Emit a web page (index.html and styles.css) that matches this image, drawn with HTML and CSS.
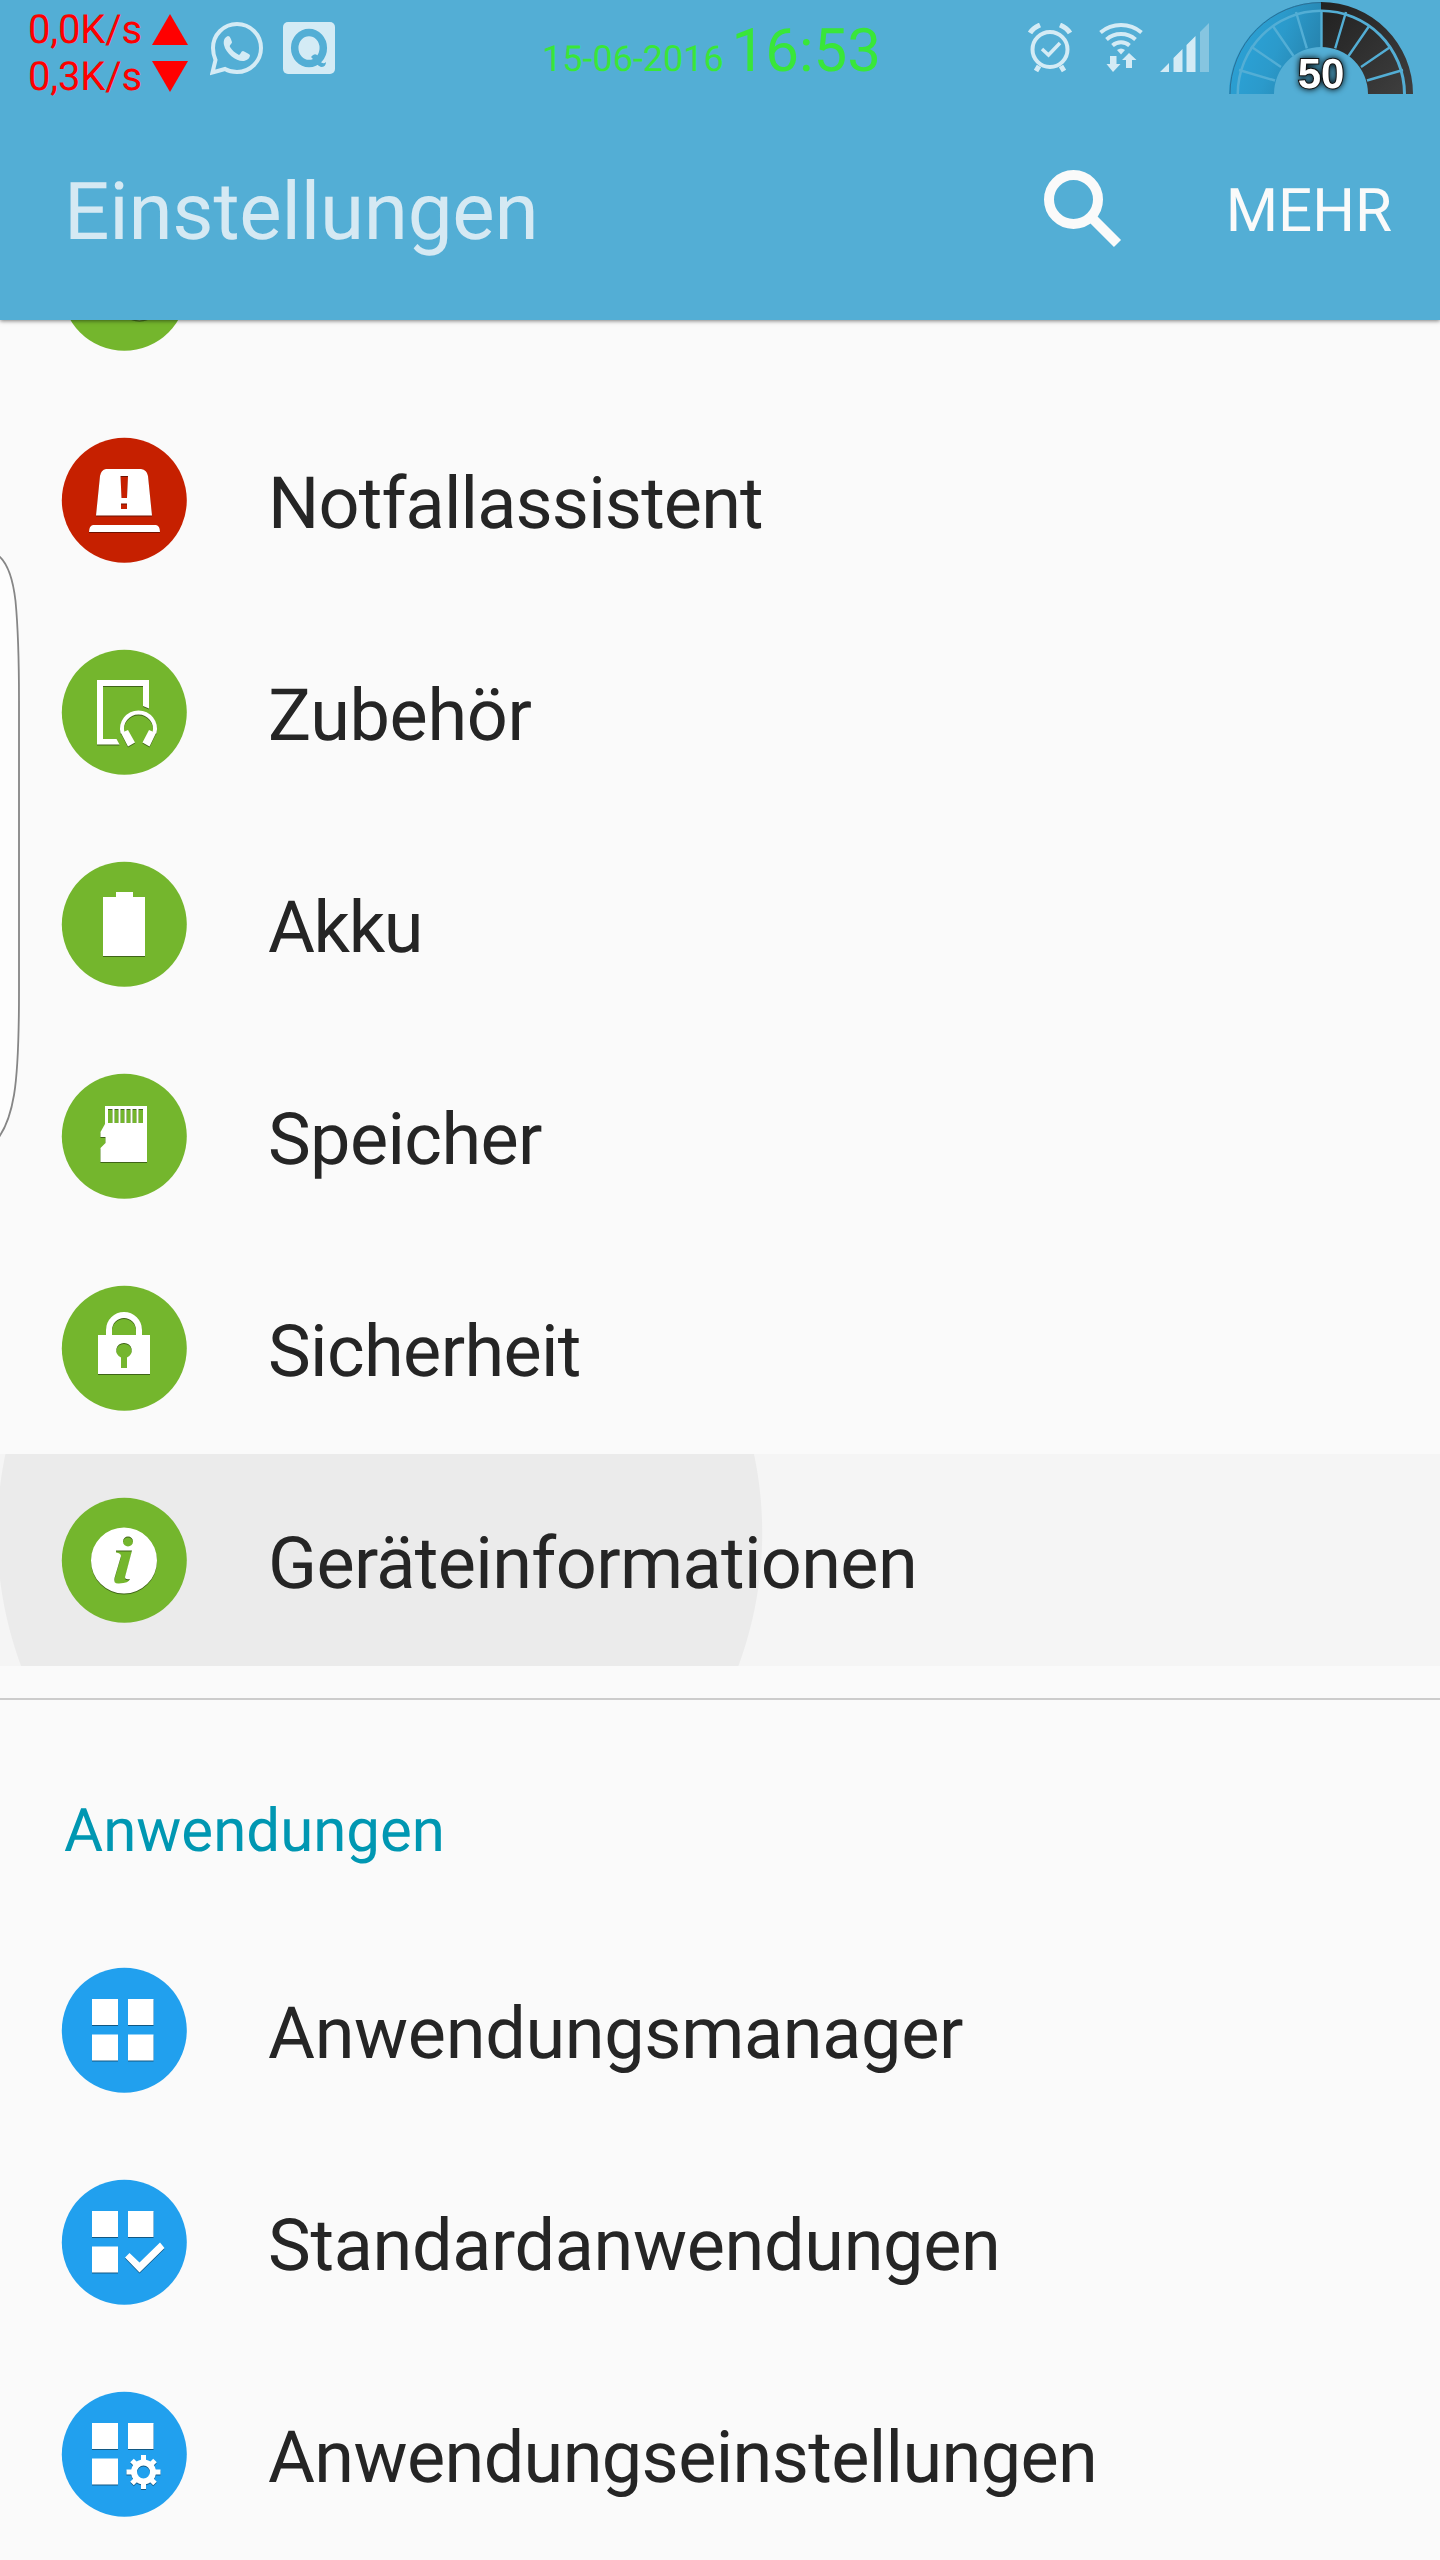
FILE: index.html
```html
<!DOCTYPE html>
<html lang="de">
<head>
<meta charset="utf-8">
<title>Einstellungen</title>
<link rel="stylesheet" href="styles.css">
</head>
<body>
<div class="screen">
  <header class="header">
    <div class="status">
      <div class="net">
        <div class="net-row"><span>0,0K/s</span><svg width="36" height="31" viewBox="0 0 36 31"><path d="M18 0 36 31H0z" fill="#f00"/></svg></div>
        <div class="net-row"><span>0,3K/s</span><svg width="36" height="31" viewBox="0 0 36 31"><path d="M0 0H36L18 31z" fill="#f00"/></svg></div>
      </div>
      <svg class="whatsapp" width="54" height="54" viewBox="0 0 54 54">
        <path d="M27 2A24 24 0 0 1 27 50Q20 50 15 47L2.500 50.500 5.500 38Q3 32 3 26A24 24 0 0 1 27 2z" fill="none" stroke="#d4ebf5" stroke-width="4"/>
        <path d="M18 14C15 15 13 18 14 23C16 32 27 40 34 39C38 38 40 36 40 33C38 31 35 30 33 29C31 29 31 32 29 33C25 31 22 28 20 25C19 23 22 22 22 20C21 17 20 14 18 14z" fill="#d4ebf5"/>
      </svg>
      <svg class="qicon" width="52" height="52" viewBox="0 0 52 52">
        <rect width="52" height="52" rx="5" fill="#d4ebf5"/>
        <ellipse cx="26" cy="26" rx="14.300" ry="15.500" fill="none" stroke="#53aed5" stroke-width="7.500"/>
        <path d="M28 35Q31 31 34 33L37 39Q40 43 43 40Q43 45 38 45Q33 43 31 38z" fill="#53aed5"/>
      </svg>
      <div class="clock"><span class="date">15-06-2016</span><span class="time">16:53</span></div>
      <svg class="alarm" width="44" height="50" viewBox="0 0 44 50" fill="none" stroke="#d4ebf5">
        <circle cx="22" cy="26.500" r="17.500" stroke-width="4"/>
        <path d="M14 26 20.500 32 32 20" stroke-width="3.500"/>
        <path d="M2 10Q5 5 12 2M42 10Q39 5 32 2M11 43 8 48M33 43 36 48" stroke-width="5"/>
      </svg>
      <svg class="wifi" width="44" height="50" viewBox="0 0 44 50">
        <g fill="none" stroke="#d4ebf5" stroke-width="4">
          <path d="M1.500 10.500A32 32 0 0 1 42.500 10.500M7.500 17.500A22 22 0 0 1 36.500 17.500M13.500 23.500A13 13 0 0 1 30.500 23.500"/>
        </g>
        <path d="M18 28Q22 25 26 28L22 32.500z" fill="#d4ebf5"/>
        <path d="M11 34h6.500v8h4L14 50 7.500 42H11zM27 46h6v-8h4.500L30 31 23 38h4z" fill="#d4ebf5"/>
      </svg>
      <svg class="signal" width="49" height="49" viewBox="0 0 49 49">
        <path d="M0 49 9 40V49zM13.500 35 22.500 26V49H13.500zM26.500 22 35.500 13V49H26.500z" fill="#d4ebf5"/>
        <path d="M40 9 49 0V49H40z" fill="#86c5e0"/>
      </svg>
      <svg class="gauge" width="184" height="94" viewBox="0 0 184 94">
        <defs>
          <linearGradient id="blueArc" x1="0" y1="0.3" x2="1" y2="0.7"><stop offset="0" stop-color="#2ba3d8"/><stop offset=".45" stop-color="#2b9acb"/><stop offset="1" stop-color="#267fa8"/></linearGradient>
          <linearGradient id="darkArc" x1="0" y1="0" x2="1" y2="1"><stop offset="0" stop-color="#222"/><stop offset="1" stop-color="#3e3e3e"/></linearGradient>
        </defs>
        <path d="M0 94A92 92 0 0 1 92 2V9.500A84.500 84.500 0 0 0 7.500 94z" fill="url(#blueArc)"/>
        <path d="M1 94A91.500 91.500 0 0 1 92 2.500" fill="none" stroke="#2c6f94" stroke-width="1"/>
        <path d="M92 2A92 92 0 0 1 184 94H177A84.500 84.500 0 0 0 92 9.500z" fill="url(#darkArc)"/>
        <path d="M10 94A82 82 0 0 1 92 12V47A47 47 0 0 0 45 94z" fill="url(#blueArc)"/>
        <path d="M92 12A82 82 0 0 1 174 94H139A47 47 0 0 0 92 47z" fill="url(#darkArc)"/>
        <g stroke="#53aed5" stroke-width="2.400">
          <path d="M92.500 48V10M106.200 48.300 117 12M119.500 56 140.500 25.500M132 67 162 46.500M138 80.500 174 70M77.800 48.300 67 12M64.500 56 43.500 25.500M52 67 22 46.500M46 80.500 10 70"/>
        </g>
        <text class="gauge-value" x="92" y="88" text-anchor="middle">50</text>
      </svg>
    </div>
    <div class="appbar">
      <h1 class="title">Einstellungen</h1>
      <svg class="search" width="78" height="78" viewBox="0 0 78 78" fill="none" stroke="#fafafa" stroke-width="10">
        <circle cx="29.500" cy="29.500" r="24.500"/><path d="M48 48 73.500 73.500"/>
      </svg>
      <span class="more">MEHR</span>
    </div>
  </header>

  <main class="content">
    <ul class="list first">
      <li class="row"><svg class="icon" viewBox="0 0 126 126"><circle cx="63.300" cy="63.300" r="62.500" fill="#74b62d"/><circle cx="78.500" cy="76.500" r="19.500" fill="#dde8d2" stroke="#47721c" stroke-width="1.500"/></svg></li>
      <li class="row"><svg class="icon" viewBox="0 0 126 126"><circle cx="63.300" cy="63.300" r="62.500" fill="#c62000"/>
        <g class="glyph"><path fill-rule="evenodd" d="M45 32H80Q86 33 87 39L91 78.500H35L39 39Q40 33 45 32zM59.500 39 60.500 61H66L67 39zM60 66.500V72H66V66.500z"/><path d="M32 88H95Q99 89 99 95H28Q28 89 32 88z"/></g></svg><span class="label tight-xl">Notfallassistent</span></li>
      <li class="row"><svg class="icon" viewBox="0 0 126 126"><circle cx="63.300" cy="63.300" r="62.500" fill="#74b62d"/>
        <g class="glyph"><path d="M36 31H88V59.500L82 57V37H42V90H55.500L58.500 95.500H36z"/><path d="M61.500 84A16.500 16.500 0 1 1 93.500 84" fill="none" stroke="#fff" stroke-width="4"/><path d="M60 84 67 81 74 93.500 67 97.500zM95 84 88 81 81.500 93.500 88.500 97.500z"/></g></svg><span class="label tight-s">Zubehör</span></li>
      <li class="row"><svg class="icon" viewBox="0 0 126 126"><circle cx="63.300" cy="63.300" r="62.500" fill="#74b62d"/>
        <path class="glyph" d="M42 36H55V31H72V36H84V95H42z"/></svg><span class="label tight-xxl">Akku</span></li>
      <li class="row"><svg class="icon" viewBox="0 0 126 126"><circle cx="63.300" cy="63.300" r="62.500" fill="#74b62d"/>
        <path class="glyph" fill-rule="evenodd" d="M44 33H86V89H39.500V75L44.500 70V64H39.500V59L44 51zM47 36V50H51.500V36zM53.500 36V50H57.500V36zM59.500 36V50H63.500V36zM65.500 36V50H69.500V36zM71.500 36V50H75.500V36zM77.500 36V50H82V36z"/></svg><span class="label tight">Speicher</span></li>
      <li class="row"><svg class="icon" viewBox="0 0 126 126"><circle cx="63.300" cy="63.300" r="62.500" fill="#74b62d"/>
        <g class="glyph"><path fill-rule="evenodd" d="M37 50H89V89H37zM63 58A7.500 7.500 0 0 0 60 72.500V83H66V72.500A7.500 7.500 0 0 0 63 58z"/><path d="M48 51V45A15 15 0 0 1 78 45V51" fill="none" stroke="#fff" stroke-width="6"/></g></svg><span class="label tight">Sicherheit</span></li>
      <li class="row pressed"><svg class="icon" viewBox="0 0 126 126"><circle cx="63.300" cy="63.300" r="62.500" fill="#74b62d"/>
        <path class="glyph" fill-rule="evenodd" d="M63 30.500A33 33 0 1 0 63 96.500A33 33 0 1 0 63 30.500zM67 39.500A5 5 0 1 1 67 49.500A5 5 0 1 1 67 39.500zM55 53.500H71L64 80Q64 83 69 82Q68 86 58 86.500Q52 87 53.500 81L60 59Q60 56 55 55.500z"/></svg><span class="label tight">Geräteinformationen</span></li>
    </ul>
    <h2 class="section">Anwendungen</h2>
    <ul class="list">
      <li class="row"><svg class="icon" viewBox="0 0 126 126"><circle cx="63.300" cy="63.300" r="62.500" fill="#21a0ee"/>
        <path class="glyph" d="M31 32H57V58H31zM67 32H92.500V58H67zM31 67.500H57V93.500H31zM67 67.500H92.500V93.500H67z"/></svg><span class="label tight-s">Anwendungsmanager</span></li>
      <li class="row"><svg class="icon" viewBox="0 0 126 126"><circle cx="63.300" cy="63.300" r="62.500" fill="#21a0ee"/>
        <path class="glyph" d="M31 32H57V58H31zM67 32H92.500V58H67zM31 67.500H57V93.500H31zM64 78.500 68.500 74 78.500 83.500 99 63.500 103.500 69 78.500 93.500z"/></svg><span class="label tight-s">Standardanwendungen</span></li>
      <li class="row"><svg class="icon" viewBox="0 0 126 126"><circle cx="63.300" cy="63.300" r="62.500" fill="#21a0ee"/>
        <g class="glyph"><path d="M31 32H57V58H31zM67 32H92.500V58H67zM31 67.500H57V93.500H31z"/><circle cx="82.500" cy="81" r="9.500" fill="none" stroke="#fff" stroke-width="6"/><path d="M82.500 64V70M82.500 92V98M65.500 81H71.500M93.500 81H99.500M71 69.500 74.500 73M90.500 89 94 92.500M71 92.500 74.500 89M90.500 73 94 69.500" stroke="#fff" stroke-width="5"/></g></svg><span class="label tight">Anwendungseinstellungen</span></li>
    </ul>
  </main>

  <svg class="edge" width="22" height="590" viewBox="0 0 22 590">
    <path d="M-1 5C7 12 13 28 15.500 50C18 76 19 110 19 150V440C19 490 18 520 14 544C11 562 6 576 -1 586" fill="#fdfdfd" stroke="#868686" stroke-width="1.800"/>
  </svg>
</div>
</body>
</html>
```
FILE: styles.css
```css
* { box-sizing: border-box; }
body { margin: 0; font-family: Roboto, "Noto Sans", sans-serif; text-rendering: geometricPrecision; }
svg { display: block; flex: none; }
.screen { position: relative; display: flex; flex-direction: column; width: 1440px; height: 2560px; overflow: hidden; background: #fafafa; }

.header { position: relative; z-index: 1; flex: none; height: 320px; background: #53aed5; box-shadow: 0 1px 4px rgba(0, 0, 0, .5); }
.status { display: flex; align-items: flex-start; height: 100px; padding-left: 28px; }
.net { display: flex; flex-direction: column; width: 160px; padding-top: 6px; color: #f00; font-size: 40px; line-height: 47px; }
.net-row { display: flex; align-items: center; justify-content: space-between; }
.net-row span { width: 124px; letter-spacing: -.2px; }
.whatsapp { margin: 22px 0 0 22px; }
.qicon { margin: 22px 0 0 19px; }
.clock { display: flex; align-items: baseline; justify-content: space-between; width: 339px; margin: 16px 0 0 207px; color: #39e639; line-height: 70px; }
.date { font-size: 36px; }
.time { font-size: 60px; }
.alarm { margin: 23px 0 0 147px; }
.wifi { margin: 22px 0 0 27px; }
.signal { margin: 23px 0 0 17px; }
.gauge { margin: 0 0 0 20px; overflow: visible; }
.gauge-value { fill: #fff; stroke: #111; stroke-width: 2px; paint-order: stroke; font: bold 42px/1 "Liberation Sans", sans-serif; filter: drop-shadow(0 0 3px #000); }

.appbar { display: flex; align-items: center; height: 220px; padding: 0 48px 0 64px; }
.title { flex: 1; margin: 3px 0 0; color: #d5e9f3; font-size: 80px; font-weight: 400; line-height: 94px; letter-spacing: -.25px; }
.search { margin: -3px 104px 0 0; }
.more { margin-top: 1px; color: #fafafa; font-size: 60px; line-height: 70px; }

.content { display: flex; flex-direction: column; margin-top: -138px; }
.list { margin: 0; padding: 0; list-style: none; }
.first { padding-bottom: 32px; border-bottom: 2px solid #ccc; }
.row { display: flex; align-items: center; gap: 81px; height: 212px; padding-left: 61px; }
.pressed { background: radial-gradient(circle at 379.7px 79px, #ebebeb 382px, #f5f5f5 383px); }
.icon { width: 126px; height: 126px; overflow: visible; }
.glyph { fill: #fff; filter: drop-shadow(.7px 1.5px .3px rgba(0, 0, 0, .45)); }
.label { padding-top: 7px; color: #252525; font-size: 72px; line-height: 84px; white-space: nowrap; }
.tight-s { letter-spacing: -.33px; }
.tight { letter-spacing: -.63px; }
.tight-xl { letter-spacing: -.85px; }
.tight-xxl { letter-spacing: -1.4px; }
.section { height: 224px; margin: 0; padding: 96px 0 0 64px; color: #0097b2; font-size: 60px; font-weight: 400; line-height: 70px; }

.edge { position: absolute; top: 551px; left: 0; }
```
